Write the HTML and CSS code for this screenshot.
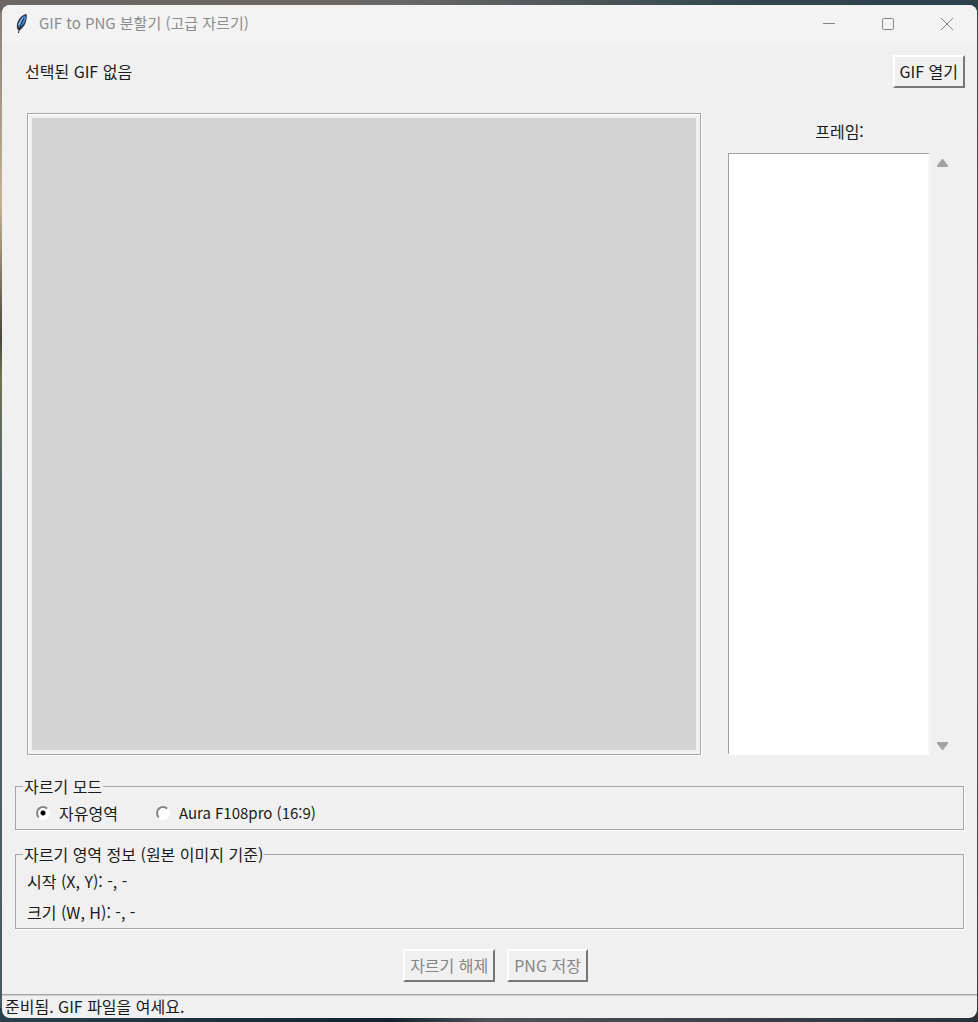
FILE: index.html
```html
<!DOCTYPE html>
<html lang="ko">
<head>
<meta charset="utf-8">
<title>GIF to PNG 분할기 (고급 자르기)</title>
<link rel="stylesheet" href="styles.css">
</head>
<body>
<div class="window">
  <header class="titlebar">
    <svg class="feather" width="16" height="22" viewBox="0 0 16 22" aria-hidden="true">
      <path d="M12 1C8 2 4 6 3 11c-.5 3 0 5 1 6h2c3-2 6-6 6.500-11C13 3 13 1.500 12 1z" fill="#2b3846"/>
      <path d="M11 2.500C8 4 5 8 4 12l1.500 3C9 12 11 9 12 5z" fill="#4b8ed8"/>
      <path d="M10 5C8 9 5.500 14 4.500 20" fill="none" stroke="#17202b"/>
      <path d="M9 5C7 7 5.500 9.500 5 12" fill="none" stroke="#a9cdf0"/>
    </svg>
    <h1 class="title">GIF to PNG 분할기 (고급 자르기)</h1>
    <div class="controls">
      <button class="control" aria-label="최소화"><svg width="13" height="13" viewBox="0 0 13 13"><path d="M0 5.500h12"/></svg></button>
      <button class="control" aria-label="최대화"><svg width="13" height="13" viewBox="0 0 13 13"><rect x=".5" y=".5" width="11" height="11" rx="1"/></svg></button>
      <button class="control" aria-label="닫기"><svg width="13" height="13" viewBox="0 0 13 13"><path d="M0 0l12 12M12 0L0 12"/></svg></button>
    </div>
  </header>
  <div class="toolbar">
    <span class="filename">선택된 GIF 없음</span>
    <button class="button">GIF 열기</button>
  </div>
  <main class="workspace">
    <div class="preview"></div>
    <section class="frames">
      <label class="frames-label" for="frame-list">프레임:</label>
      <div class="frames-body">
        <select class="frame-list" id="frame-list" size="20"></select>
        <div class="scrollbar">
          <svg width="11" height="8" viewBox="0 0 11 8"><path d="M5 0h1l5 6.500V8H0V6.500z"/></svg>
          <svg width="11" height="8" viewBox="0 0 11 8"><path d="M0 0h11v1.500L6 8H5L0 1.500z"/></svg>
        </div>
      </div>
    </section>
  </main>
  <fieldset class="group mode">
    <legend>자르기 모드</legend>
    <label class="option"><input class="radio" type="radio" name="mode" checked>자유영역</label>
    <label class="option preset"><input class="radio" type="radio" name="mode">Aura F108pro (16:9)</label>
  </fieldset>
  <fieldset class="group info">
    <legend>자르기 영역 정보 (원본 이미지 기준)</legend>
    <p class="info-row">시작 (X, Y): -, -</p>
    <p class="info-row">크기 (W, H): -, -</p>
  </fieldset>
  <div class="actions">
    <button class="button" disabled>자르기 해제</button>
    <button class="button" disabled>PNG 저장</button>
  </div>
  <footer class="status">준비됨. GIF 파일을 여세요.</footer>
</div>
</body>
</html>
```
FILE: styles.css
```css
* {
  box-sizing: border-box;
}

body {
  margin: 0;
  min-height: 100vh;
  display: flex;
  padding: 5px 1px 4px 2px;
  background:
    linear-gradient(90deg, #6d6663, #6a6866 40%, #34474f 75%, #2d414a) top / 100% 12px no-repeat,
    linear-gradient(90deg, #28404a, #14232b 40%, #4b525a 50%, #263139) bottom / 100% 14px no-repeat,
    linear-gradient(#887d77, #c6b292 20%, #4b4638 33%, #6f7550 37%, #50646d 48%, #465a63) left / 50% 100% no-repeat,
    linear-gradient(#34474f, #59666b 50%, #333c40) right / 50% 100% no-repeat;
  font: 16px/20px "Noto Sans CJK KR", sans-serif;
  color: #1a1a1a;
}

.window {
  flex: 1;
  display: flex;
  flex-direction: column;
  overflow: hidden;
  border-radius: 8px;
  background: #f0f0f0;
}

.titlebar {
  display: flex;
  align-items: center;
  height: 38px;
  padding-left: 12px;
  background: #f3f3f3;
}

.title {
  flex: 1;
  margin: 0 0 0 9px;
  padding-bottom: 2px;
  font-size: 15px;
  font-weight: 400;
  color: #8c8c8c;
}

.controls {
  display: flex;
}

.control {
  width: 59px;
  height: 38px;
  padding: 0;
  border: 0;
  background: none;
}

.control svg {
  display: block;
  margin: auto;
  overflow: visible;
  fill: none;
  stroke: #858585;
}

.toolbar {
  display: flex;
  align-items: center;
  justify-content: space-between;
  padding: 12px 12px 0 23px;
}

.filename {
  padding-bottom: 2px;
}

.button {
  height: 33px;
  padding: 0 5px 2px;
  border: 2px solid;
  border-color: #fff #767676 #767676 #fff;
  background: #f0f0f0;
  font: inherit;
  color: #1a1a1a;
}

.button:disabled {
  color: #858585;
}

.workspace {
  flex: 1;
  display: flex;
  gap: 27px;
  padding: 25px 26px 21px 25px;
}

.preview {
  flex: 1;
  border: 1px solid #a5a5a5;
  padding: 4px;
  background: #d3d3d3 content-box;
  box-shadow: inset 1px 1px #fff, 1px 1px #fff;
}

.frames {
  display: flex;
  flex-direction: column;
  width: 223px;
  padding-top: 8px;
}

.frames-label {
  margin-bottom: 12px;
  text-align: center;
}

.frames-body {
  flex: 1;
  display: flex;
  gap: 3px;
}

.frame-list {
  flex: 1;
  min-width: 0;
  border: 2px solid;
  border-color: #a0a0a0 #f6f6f6 #fff #a0a0a0;
  border-width: 1px 2px 2px 1px;
  border-radius: 0;
  background: #fff;
  font: inherit;
}

.scrollbar {
  display: flex;
  flex-direction: column;
  align-items: center;
  justify-content: space-between;
  width: 18px;
  padding: 6px 0 5px;
  fill: #a3a3a3;
}

.group {
  min-width: 0;
  margin: 0 13px 14px;
  border: 1px solid #a5a5a5;
  box-shadow: 1px 1px #fff;
}

.group legend {
  padding: 0 1px;
}

.mode {
  display: flex;
  gap: 38px;
  padding: 7px 20px 6px;
}

.mode legend {
  margin-left: -13px;
}

.info {
  padding: 7px 11px 6px;
}

.info legend {
  margin-left: -4px;
}

.option {
  display: flex;
  align-items: center;
  gap: 9px;
  height: 20px;
}

.preset {
  font-size: 15px;
}

.radio {
  appearance: none;
  width: 14px;
  height: 14px;
  margin: 0;
  border: 2px solid;
  border-color: #858585 #fff #fff #858585;
  border-radius: 50%;
  background: #fff;
}

.radio:checked {
  background: radial-gradient(circle, #000 2px, #fff 3px);
}

.info-row {
  margin: 0;
}

.info-row + .info-row {
  margin-top: 11px;
}

.actions {
  display: flex;
  justify-content: center;
  gap: 12px;
  padding: 6px 0 12px 12px;
}

.status {
  height: 24px;
  padding: 1px 3px;
  border-top: 1px solid #a5a5a5;
  box-shadow: inset 0 1px #d0d0d0;
}
```
